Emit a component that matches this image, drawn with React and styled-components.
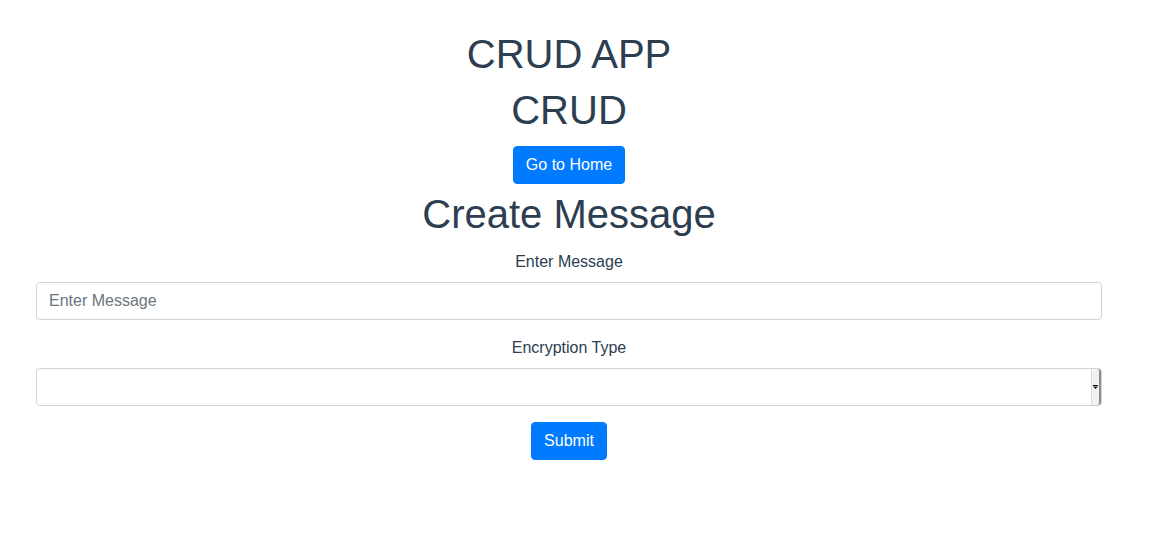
import React from "react";
import styled, { createGlobalStyle } from "styled-components";

const GlobalStyle = createGlobalStyle`
  *, *::before, *::after {
    box-sizing: border-box;
  }

  body {
    margin: 0;
    background: #fff;
    font-family: "Liberation Sans", Helvetica, Arial, sans-serif;
    font-size: 16px;
    line-height: 1.5;
    color: #2c3e50;
    -webkit-font-smoothing: antialiased;
  }
`;

const Page = styled.div`
  padding: 30px 18px 0 0;
  text-align: center;
`;

const Heading = styled.h1`
  margin: 0 0 8px 0;
  font-size: 40px;
  font-weight: 400;
  line-height: 1.2;
  color: #2c3e50;
`;

const Nav = styled.div`
  padding: 4px 0 6px 0;
`;

const Button = styled.button`
  display: inline-block;
  padding: 6px 12px;
  font-family: inherit;
  font-size: 16px;
  line-height: 1.5;
  color: #fff;
  background: #007bff;
  border: 1px solid #007bff;
  border-radius: 4px;
  cursor: pointer;
`;

const Form = styled.form`
  padding: 4px 36px 0 36px;
`;

const FormGroup = styled.div`
  margin-bottom: 16px;
`;

const Label = styled.label`
  display: inline-block;
  margin-bottom: 8px;
  color: #2c3e50;
`;

const Input = styled.input`
  display: block;
  width: 100%;
  height: 38px;
  padding: 6px 12px;
  font-family: inherit;
  font-size: 16px;
  line-height: 1.5;
  color: #495057;
  background: #fff;
  border: 1px solid #ced4da;
  border-radius: 4px;
  outline: none;

  &::placeholder {
    color: #6c757d;
  }
`;

const SelectWrap = styled.div`
  position: relative;
`;

const Select = styled.select`
  display: block;
  width: 100%;
  height: 38px;
  padding: 6px 24px 6px 12px;
  font-family: inherit;
  font-size: 16px;
  color: #495057;
  background: #fff;
  border: 1px solid #ced4da;
  border-radius: 4px;
  outline: none;
  appearance: none;
  -webkit-appearance: none;
`;

// old-style native dropdown button drawn over the select's right end
const DropButton = styled.span`
  position: absolute;
  top: 1px;
  bottom: 1px;
  right: 1px;
  width: 10px;
  display: flex;
  align-items: center;
  justify-content: center;
  background: #f1f1f1;
  border-left: 1px solid #dcdcdc;
  border-right: 2px solid #8c8c8c;
  border-radius: 0 3px 3px 0;
  pointer-events: none;
`;

function App() {
  return (
    <>
      <GlobalStyle />
      <Page>
        <Heading>CRUD APP</Heading>
        <Heading>CRUD</Heading>
        <Nav>
          <Button type="button">Go to Home</Button>
        </Nav>
        <Heading>Create Message</Heading>
        <Form onSubmit={(e) => e.preventDefault()}>
          <FormGroup>
            <Label htmlFor="message">Enter Message</Label>
            <Input id="message" type="text" placeholder="Enter Message" />
          </FormGroup>
          <FormGroup>
            <Label htmlFor="encryption">Encryption Type</Label>
            <SelectWrap>
              <Select id="encryption" defaultValue="">
                <option value="" disabled hidden></option>
                <option value="aes">AES</option>
                <option value="des">DES</option>
              </Select>
              <DropButton>
                <svg width="5" height="4" viewBox="0 0 5 4">
                  <rect x="0" y="0" width="5" height="1" fill="#111" />
                  <path d="M0 1.5 H5 L2.5 4 Z" fill="#111" />
                </svg>
              </DropButton>
            </SelectWrap>
          </FormGroup>
          <Button type="submit">Submit</Button>
        </Form>
      </Page>
    </>
  );
}

export default App;
